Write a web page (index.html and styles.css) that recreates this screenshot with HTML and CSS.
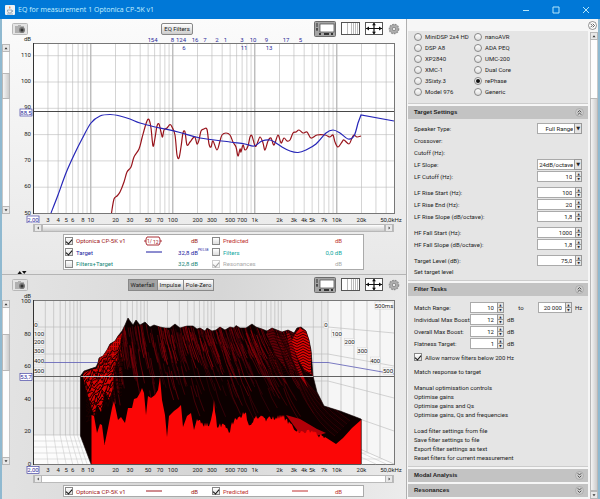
FILE: index.html
```
<!DOCTYPE html>
<html lang="en">
<head>
  <meta charset="UTF-8">
  <meta name="viewport" content="width=device-width, initial-scale=1.0">
  <title>EQ for measurement 1 Optonica CP-5K v1</title>
  <link rel="stylesheet" href="styles.css">
</head>
<body>
  <svg class="defs" width="0" height="0">
    <symbol id="camera" viewBox="0 0 16 12">
      <rect x="0.5" y="0.5" width="15" height="11" rx="1" fill="#e4e4e4" stroke="#b8b8b8"/>
      <path d="M3 3h3v-1h3v1h3v7H3z" fill="#b0b0b0"/>
      <circle cx="10" cy="7" r="3" fill="#777"/>
      <circle cx="10" cy="7" r="1.5" fill="#333"/>
    </symbol>
    <symbol id="device" viewBox="0 0 22 16">
      <rect x="0.5" y="0.5" width="21" height="15" rx="1" fill="#a4a4a4" stroke="#6c6c6c"/>
      <rect x="6" y="3" width="14" height="8" fill="#fff" stroke="#444" stroke-width=".7"/>
      <path d="M2 3h2M2 5h2M2 8h2M3 7v3" stroke="#333"/>
      <path d="M5 13h2M10 13h5M17 13h2" stroke="#333" stroke-width="2"/>
    </symbol>
    <symbol id="lines" viewBox="0 0 19 13">
      <rect x="0.5" y="0.5" width="18" height="12" fill="#fff" stroke="#555"/>
      <path d="M6.5 1v11M10.5 1v11M12.5 1v11M14.5 1v11M16.500 1v11" stroke="#aaa" stroke-width=".8"/>
    </symbol>
    <symbol id="arrows" viewBox="0 0 18 13">
      <rect x="0.5" y="0.5" width="17" height="12" fill="#fff" stroke="#555"/>
      <path d="M1 6.500h16M9 1v11" stroke="#111" stroke-width="1.200"/>
      <path d="M1 6.500l3-2v4zM17 6.500l-3-2v4zM9 .8l-2 2.500h4zM9 12.200l-2-2.500h4z" fill="#111"/>
    </symbol>
    <symbol id="gear" viewBox="0 0 12 12">
      <circle cx="6" cy="6" r="4.700" fill="#b5b5b5" stroke="#8c8c8c" stroke-width="1.200" stroke-dasharray="1.800 1"/>
      <circle cx="6" cy="6" r="3.800" fill="#b5b5b5" stroke="#999" stroke-width=".6"/>
      <circle cx="6" cy="6" r="1.800" fill="#e8e8e8" stroke="#777" stroke-width=".8"/>
    </symbol>
    <symbol id="up" viewBox="0 0 8 8"><path d="M4 3l2 2.500H2z" fill="#333"/></symbol>
    <symbol id="down" viewBox="0 0 8 8"><path d="M4 5.500l2-2.500H2z" fill="#333"/></symbol>
    <symbol id="left" viewBox="0 0 8 8"><path d="M3 4l2-2v4z" fill="#333"/></symbol>
    <symbol id="right" viewBox="0 0 8 8"><path d="M5.500 4l-2-2v4z" fill="#333"/></symbol>
    <symbol id="fold" viewBox="0 0 9 9">
      <circle cx="4.500" cy="4.500" r="4" fill="#ccc" stroke="#a4a4a4" stroke-width=".7"/>
      <path d="M2.700 4.300l1.800-1.800 1.800 1.800M2.700 6.800L4.500 5l1.800 1.800" fill="none" stroke="#444" stroke-width=".9"/>
    </symbol>
    <symbol id="unfold" viewBox="0 0 9 9">
      <circle cx="4.500" cy="4.500" r="4" fill="#ccc" stroke="#a4a4a4" stroke-width=".7"/>
      <path d="M2.700 2.200L4.500 4l1.800-1.800M2.700 4.700l1.800 1.800 1.800-1.800" fill="none" stroke="#444" stroke-width=".9"/>
    </symbol>
  </svg>

  <header class="titlebar">
    <svg class="app-icon" viewBox="0 0 10 10">
      <rect width="10" height="10" rx="1" fill="#eef2f5"/>
      <path d="M5 1q-2 1.500 0 3 1-1.500 0-3" fill="#e08a50"/>
      <path d="M2.500 5h4.500v1q0 2-2.200 2T2.500 6zM7 5.500q1.500 0 0 1.500M2 9h6" fill="none" stroke="#8a9aa8" stroke-width=".8"/>
    </svg>
    <h1>EQ for measurement 1 Optonica CP-5K v1</h1>
    <button class="win" aria-label="Minimize"><svg viewBox="0 0 8 8"><path d="M1 4.500h6"/></svg></button>
    <button class="win" aria-label="Maximize"><svg viewBox="0 0 8 8"><path d="M1 1h6v6H1z"/></svg></button>
    <button class="win" aria-label="Close"><svg viewBox="0 0 8 8"><path d="M1 1l6 6M7 1L1 7"/></svg></button>
  </header>

  <main class="window">
    <div class="graphs">
      <section class="graph top">
        <div class="toolbar">
          <button class="icon" aria-label="Capture"><svg class="i-camera"><use href="#camera"/></svg></button>
          <div class="tabs"><button class="tab">EQ Filters</button></div>
          <div class="tools">
            <button class="icon" aria-label="Scrollbars"><svg class="i-device"><use href="#device"/></svg></button>
            <button class="icon" aria-label="Frequency axis"><svg class="i-lines"><use href="#lines"/></svg></button>
            <button class="icon" aria-label="Limits"><svg class="i-arrows"><use href="#arrows"/></svg></button>
            <button class="icon" aria-label="Controls"><svg class="i-gear"><use href="#gear"/></svg></button>
          </div>
        </div>
        <div class="vscroll">
          <svg class="arrow"><use href="#up"/></svg><i class="thumb"></i><svg class="arrow"><use href="#down"/></svg>
        </div>
        <svg class="plot" id="eqPlot" viewBox="10 36 396 187"></svg>
        <div class="hscroll full">
          <svg class="arrow"><use href="#left"/></svg><i class="thumb"></i><svg class="arrow"><use href="#right"/></svg>
        </div>
        <div class="legend">
          <label class="red"><input type="checkbox" checked>Optonica CP-5K v1</label>
          <svg class="trace" viewBox="0 0 20 10">
            <path d="M1 5h18" stroke="#a01820" stroke-width=".9"/>
            <path d="M4 1h12l1 2v4l-1 2H4L3 7V3z" fill="#fff" stroke="#a01820" stroke-width=".9"/>
            <text x="4" y="7">1/</text><text x="10" y="8">12</text>
          </svg>
          <output class="red">dB</output>
          <label class="lightred"><input type="checkbox">Predicted</label>
          <output class="lightred">dB</output>

          <label class="blue"><input type="checkbox" checked>Target</label>
          <svg class="trace" viewBox="0 0 20 10"><path d="M3 5h16" stroke="#1a1aa0"/></svg>
          <output class="blue">32,8 dB<sup>PK/LSB</sup></output>
          <label class="teal"><input type="checkbox">Filters</label>
          <output class="teal">0,0 dB</output>

          <label class="green"><input type="checkbox">Filters+Target</label>
          <span></span>
          <output class="green">32,8 dB</output>
          <label class="grey"><input type="checkbox" checked disabled>Resonances</label>
          <output class="grey">dB</output>
        </div>
      </section>

      <div class="splitter">
        <svg viewBox="0 0 12 4"><path d="M0 4l3-4 3 4zM6 0h6L9 4z" fill="#111"/></svg>
      </div>

      <section class="graph bottom">
        <div class="toolbar">
          <button class="icon" aria-label="Capture"><svg class="i-camera"><use href="#camera"/></svg></button>
          <div class="tabs">
            <button class="tab active">Waterfall</button><button class="tab">Impulse</button><button class="tab">Pole-Zero</button>
          </div>
          <div class="tools">
            <button class="icon" aria-label="Scrollbars"><svg class="i-device"><use href="#device"/></svg></button>
            <button class="icon" aria-label="Frequency axis"><svg class="i-lines"><use href="#lines"/></svg></button>
            <button class="icon" aria-label="Limits"><svg class="i-arrows"><use href="#arrows"/></svg></button>
            <button class="icon" aria-label="Controls"><svg class="i-gear"><use href="#gear"/></svg></button>
          </div>
        </div>
        <div class="vscroll">
          <svg class="arrow"><use href="#up"/></svg><i class="thumb"></i><svg class="arrow"><use href="#down"/></svg>
        </div>
        <svg class="plot" id="waterfall" viewBox="10 292 396 182"></svg>
        <div class="hscroll">
          <svg class="arrow"><use href="#left"/></svg><i class="thumb"></i><svg class="arrow"><use href="#right"/></svg>
        </div>
        <div class="legend single">
          <label class="red"><input type="checkbox" checked>Optonica CP-5K v1</label>
          <svg class="trace" viewBox="0 0 20 10"><path d="M3 5h16" stroke="#a01820"/></svg>
          <output class="red">dB</output>
          <label class="lightred"><input type="checkbox" checked>Predicted</label>
          <svg class="trace" viewBox="0 0 20 10"><path d="M3 5h16" stroke="#c03030"/></svg>
          <output class="lightred">dB</output>
        </div>
      </section>
    </div>

    <aside class="settings">
      <div class="panels">
        <div class="equalisers">
          <label><input type="radio" name="eq">MiniDSP 2x4 HD</label><label><input type="radio" name="eq">nanoAVR</label>
          <label><input type="radio" name="eq">DSP A8</label><label><input type="radio" name="eq">ADA PEQ</label>
          <label><input type="radio" name="eq">XP2840</label><label><input type="radio" name="eq">UMC-200</label>
          <label><input type="radio" name="eq">XMC-1</label><label><input type="radio" name="eq">Dual Core</label>
          <label><input type="radio" name="eq">3Sixty.3</label><label><input type="radio" name="eq" checked>rePhase</label>
          <label><input type="radio" name="eq">Model 976</label><label><input type="radio" name="eq">Generic</label>
        </div>

        <section class="panel">
          <h2>Target Settings<svg><use href="#fold"/></svg></h2>
          <div class="body target">
            <div class="row"><label for="speaker">Speaker Type:</label><span class="combo"><select id="speaker"><option>Full Range</option></select></span></div>
            <div class="row"><span>Crossover:</span></div>
            <div class="row"><span>Cutoff (Hz):</span></div>
            <div class="row"><label for="slope">LF Slope:</label><span class="combo"><select id="slope"><option>24dB/octave</option></select></span></div>
            <div class="row last"><label for="cutoff">LF Cutoff (Hz):</label><span class="spin"><input type="text" id="cutoff" value="10"></span></div>
            <div class="row"><label for="riseStart">LF Rise Start (Hz):</label><span class="spin"><input type="text" id="riseStart" value="100"></span></div>
            <div class="row"><label for="riseEnd">LF Rise End (Hz):</label><span class="spin"><input type="text" id="riseEnd" value="20"></span></div>
            <div class="row last"><label for="riseSlope">LF Rise Slope (dB/octave):</label><span class="spin"><input type="text" id="riseSlope" value="1,8"></span></div>
            <div class="row"><label for="fallStart">HF Fall Start (Hz):</label><span class="spin"><input type="text" id="fallStart" value="1000"></span></div>
            <div class="row last"><label for="fallSlope">HF Fall Slope (dB/octave):</label><span class="spin"><input type="text" id="fallSlope" value="1,8"></span></div>
            <div class="row"><label for="level">Target Level (dB):</label><span class="spin"><input type="text" id="level" value="75,0"></span></div>
            <button class="task">Set target level</button>
          </div>
        </section>

        <section class="panel">
          <h2>Filter Tasks<svg><use href="#fold"/></svg></h2>
          <div class="body filter">
            <div class="row range">
              <label for="from">Match Range:</label><span class="spin"><input type="text" id="from" value="10"></span>
              <label class="to" for="to">to</label><span class="spin"><input type="text" id="to" value="20 000"></span><span class="unit">Hz</span>
            </div>
            <div class="row"><label for="individual">Individual Max Boost:</label><span class="spin"><input type="text" id="individual" value="12"></span><span class="unit">dB</span></div>
            <div class="row"><label for="overall">Overall Max Boost:</label><span class="spin"><input type="text" id="overall" value="12"></span><span class="unit">dB</span></div>
            <div class="row"><label for="flatness">Flatness Target:</label><span class="spin"><input type="text" id="flatness" value="1"></span><span class="unit">dB</span></div>
            <label class="narrow"><input type="checkbox" checked>Allow narrow filters below 200 Hz</label>
            <button class="task last">Match response to target</button>
            <button class="task">Manual optimisation controls</button>
            <button class="task">Optimise gains</button>
            <button class="task">Optimise gains and Qs</button>
            <button class="task last">Optimise gains, Qs and frequencies</button>
            <button class="task">Load filter settings from file</button>
            <button class="task">Save filter settings to file</button>
            <button class="task">Export filter settings as text</button>
            <button class="task">Reset filters for current measurement</button>
          </div>
        </section>

        <section class="panel"><h2>Modal Analysis<svg><use href="#unfold"/></svg></h2></section>
        <section class="panel"><h2>Resonances<svg><use href="#unfold"/></svg></h2></section>
      </div>
      <div class="side">
        <button class="icon" aria-label="Hide panel">
          <svg class="hide" viewBox="0 0 9 9"><circle cx="4.500" cy="4.500" r="4" fill="#fff" stroke="#666" stroke-width=".7"/><path d="M2.500 2.700l1.800 1.800-1.800 1.800M4.700 2.700l1.800 1.800-1.800 1.800" fill="none" stroke="#333" stroke-width=".8"/></svg>
        </button>
        <div class="vscroll">
          <svg class="arrow"><use href="#up"/></svg><i class="thumb"></i><svg class="arrow"><use href="#down"/></svg>
        </div>
      </div>
    </aside>
  </main>
  <script src="plot.js"></script>
</body>
</html>
```
FILE: styles.css
```
*,
*::before,
*::after {
  box-sizing: border-box;
}

body {
  margin: 0;
  min-height: 100vh;
  display: flex;
  flex-direction: column;
  font: 6px/9px Roboto, "Liberation Sans", sans-serif;
  color: #222;
  background: #e8e8e8;
}

button, input, select {
  font: inherit;
  color: inherit;
  margin: 0;
  padding: 0;
}

button {
  border: none;
  background: none;
}

svg {
  display: block;
}

.defs {
  position: absolute;
}

/* title bar */
.titlebar {
  display: flex;
  align-items: center;
  height: 19px;
  padding: 0 10px 0 5px;
  background: #0078d7;
}

.app-icon {
  width: 10px;
  height: 10px;
}

.titlebar h1 {
  flex: 1;
  margin: 0 0 0 3px;
  font: 7px/19px "Open Sans", sans-serif;
  color: #c4f0ff;
}

.win {
  margin-left: 22px;
}

.win svg {
  width: 8px;
  height: 8px;
  fill: none;
  stroke: #b4e6fa;
  stroke-width: 1;
}

/* window */
.window {
  flex: 1;
  display: flex;
  border: solid #8fb9d0;
  border-width: 0 2px 2px;
  border-bottom-color: #5b9fd4;
}

.graphs {
  flex: 1;
  display: flex;
  flex-direction: column;
  min-width: 0;
  background: #ededed;
  border-right: 1px solid #b0b0b0;
}

.graph {
  display: grid;
  grid-template-columns: 8px 1fr;
  align-content: start;
}

.top {
  grid-template-rows: 17px auto 9px 38px;
  background: linear-gradient(#fbfbfb, #e8e8e8);
}

.bottom {
  flex: 1;
  grid-template-rows: 17px auto 9px 16px;
  background: linear-gradient(100deg, #e4e4e4, #d6d6d6 50%, #ececec);
}

.toolbar {
  grid-column: 1 / 3;
  display: flex;
  align-items: center;
  padding: 2px 6px 0 10px;
}

.i-camera { width: 16px; height: 12px; }
.i-device { width: 22px; height: 16px; }
.i-lines { width: 19px; height: 13px; }
.i-arrows { width: 18px; height: 13px; }
.i-gear { width: 12px; height: 12px; }

.tabs {
  display: flex;
  flex: 1;
  justify-content: center;
}

.top .tabs {
  padding-left: 12px;
}

.tab {
  height: 12px;
  padding: 0 2px;
  line-height: 10px;
  border: 1px solid #888;
  background: linear-gradient(#fff, #ccc);
  white-space: nowrap;
}

.top .tab {
  border-radius: 2px;
}

.tab + .tab {
  border-left: none;
}

.tab.active {
  background: #a4a4a4;
}

.tools {
  display: flex;
  align-items: center;
  gap: 5px;
}

.plot {
  width: 100%;
}

.plot text {
  font-size: 6px;
  fill: #222;
}

.plot .mark {
  fill: #2a2a9a;
}

/* scroll bars */
.vscroll {
  display: flex;
  flex-direction: column;
  align-items: center;
  background: #fdfdfd;
  border: solid #c8c8c8;
  border-width: 0 1px;
}

.graph .vscroll {
  margin: 8px 0 9px;
}

.arrow {
  flex: none;
  width: 8px;
  height: 8px;
  background: #e8e8e8;
  border: 1px solid #b8b8b8;
}

.thumb {
  background: linear-gradient(90deg, #f4f4f4, #ccc);
  border: 1px solid #b8b8b8;
}

.vscroll .thumb {
  width: 8px;
  height: 26px;
  margin: 21px 0 auto;
}

.bottom .vscroll .thumb {
  height: 37px;
  margin-top: 26px;
}

.hscroll {
  grid-column: 2;
  display: flex;
  align-items: center;
  height: 8px;
  margin: 1px 12px 0 23px;
  background: #fff;
  border: 1px solid #bbb;
}

.hscroll .thumb {
  flex: 1;
  height: 8px;
  background: linear-gradient(#fff, #ccc);
  visibility: hidden;
}

.hscroll.full .thumb {
  visibility: visible;
}

/* legend */
.legend {
  grid-column: 2;
  display: grid;
  grid-template-columns: 77px 22px 32px 1fr 30px;
  align-items: center;
  column-gap: 1px;
  width: 301px;
  height: 36px;
  margin: 2px 0 0 53px;
  padding: 0 21px 0 1px;
  background: #fff;
  border: 1px solid #aaa;
}

.legend.single {
  grid-template-columns: 77px 22px 32px 1fr 22px 30px;
  height: 12px;
}

.legend label {
  display: flex;
  align-items: center;
  gap: 3px;
  white-space: nowrap;
}

.legend label:nth-of-type(even) {
  padding-left: 13px;
}

.legend output {
  text-align: right;
  white-space: nowrap;
}

.legend sup {
  position: absolute;
  margin-top: -1px;
  font-size: 3px;
  line-height: 6px;
}

.trace {
  width: 20px;
  height: 10px;
}

.trace text {
  font-size: 5px;
  fill: #a01820;
}

.red { color: #a01820; }
.lightred { color: #c03030; }
.blue { color: #1a1aa0; }
.teal { color: #10a8a0; }
.green { color: #208878; }
.grey { color: #aaa; }

input[type="checkbox"],
input[type="radio"] {
  appearance: none;
  flex: none;
  width: 8px;
  height: 8px;
  border: 1px solid #888;
  background: linear-gradient(#fff, #ddd);
}

input[type="radio"] {
  border-radius: 50%;
}

input[type="checkbox"]:checked::before {
  content: "";
  display: block;
  width: 4px;
  height: 6px;
  margin-left: 1px;
  border: solid #111;
  border-width: 0 1px 1px 0;
  transform: rotate(40deg);
}

input[type="checkbox"]:disabled {
  opacity: 0.4;
}

input[type="radio"]:checked::before {
  content: "";
  display: block;
  width: 4px;
  height: 4px;
  margin: 1px;
  border-radius: 50%;
  background: #111;
}

.splitter {
  height: 5px;
  padding: 1px 0 0 14px;
  background: #e4e4e4;
  border-bottom: 1px solid #b4b4b4;
}

.splitter svg {
  width: 12px;
  height: 3px;
}

/* settings */
.settings {
  display: flex;
  flex: none;
  width: 191px;
  background: #f6f6f6;
}

.panels {
  flex: 1;
  display: flex;
  flex-direction: column;
  gap: 2px;
  padding: 12px 0 0 1px;
}

.equalisers {
  display: grid;
  grid-template-columns: 60px 1fr;
  grid-auto-rows: 11px;
  align-items: center;
  height: 73px;
  padding-left: 6px;
  background: #e5e5e5;
  border-bottom: 1px solid #ccc;
}

.equalisers label,
.narrow {
  display: flex;
  align-items: center;
  gap: 3px;
}

.panel h2 {
  display: flex;
  align-items: center;
  justify-content: space-between;
  height: 13px;
  margin: 0;
  padding: 0 4px 0 6px;
  font: bold 6px/13px "Liberation Sans", sans-serif;
  background: #c3c3c3;
}

.panel h2 svg {
  width: 9px;
  height: 9px;
}

.body {
  padding: 5px 6px 4px;
  background: #e5e5e5;
  border-bottom: 1px solid #ccc;
}

.body.target {
  padding-top: 3px;
}

.row {
  display: flex;
  align-items: center;
  justify-content: space-between;
  height: 12px;
}

.row.last {
  margin-bottom: 4px;
}

.combo,
.spin {
  position: relative;
  flex: none;
  width: 45px;
  height: 11px;
}

.combo select,
.spin input {
  display: block;
  appearance: none;
  width: 100%;
  height: 11px;
  padding-right: 9px;
  text-align: right;
  text-align-last: right;
  border: 1px solid #aaa;
  border-radius: 0;
  background: #fff;
}

.combo select {
  padding-right: 8px;
}

.combo::after,
.spin::before,
.spin::after {
  content: "\25BC";
  position: absolute;
  right: 0;
  bottom: 0;
  width: 8px;
  height: 11px;
  font: 5px/9px "DejaVu Sans", sans-serif;
  text-align: center;
  background: #e4e4e4;
  border: 1px solid #999;
  pointer-events: none;
}

.spin::before,
.spin::after {
  width: 7px;
  height: 6px;
  font-size: 3px;
  line-height: 4px;
}

.spin::before {
  content: "\25B2";
  bottom: 5px;
}

.filter .row {
  justify-content: flex-start;
}

.filter .row label:first-child {
  width: 56px;
  white-space: nowrap;
}

.filter .spin {
  width: 34px;
}

.filter .to {
  width: 34px;
  text-align: center;
}

.unit {
  margin-left: 3px;
}

.narrow {
  height: 10px;
  margin: 3px 0 5px;
}

.task {
  display: block;
  height: 9px;
  line-height: 9px;
}

.target .task {
  height: 10px;
}

.task.last {
  margin-bottom: 7px;
}

.side {
  display: flex;
  flex-direction: column;
  width: 10px;
  padding-top: 2px;
}

.hide {
  width: 9px;
  height: 9px;
}

.side .vscroll {
  flex: 1;
  margin: 2px 0 0 2px;
}

.side .vscroll .thumb {
  flex: 1;
  margin: 58px 0 0;
}
```
FILE: plot.js
```
const NS = 'http://www.w3.org/2000/svg';

function add(parent, tag, attrs, text) {
  const el = document.createElementNS(NS, tag);
  for (const k in attrs) el.setAttribute(k, attrs[k]);
  if (text !== undefined) el.textContent = text;
  parent.appendChild(el);
  return el;
}

function line(svg, x1, y1, x2, y2, stroke, width) {
  add(svg, 'line', { x1, y1, x2, y2, stroke, 'stroke-width': width || 0.6 });
}

function label(svg, x, y, text, anchor, cls) {
  add(svg, 'text', { x, y, 'text-anchor': anchor || 'middle', class: cls || '' }, text);
}

// boxed value on an axis
function tag(svg, x, y, w, text, stroke) {
  add(svg, 'rect', { x, y, width: w, height: 7, fill: '#fff', stroke: stroke, 'stroke-width': 0.6 });
  label(svg, x + w / 2, y + 5.6, text, 'middle', stroke === '#ccc' ? '' : 'mark');
}

// frequency to x, 2 Hz at the left edge
const fx = (f, perDecade) => 33.5 + Math.log10(f / 2) * perDecade;

function freqs() {
  const out = [];
  for (let d = 1; d <= 10000; d *= 10) {
    for (let m = 1; m < 10; m++) if (m * d > 2 && m * d < 50000) out.push(m * d);
  }
  return out;
}

function freqLabels(svg, y) {
  const names = { 3: '3', 4: '4', 5: '5', 6: '6', 8: '8', 10: '10', 20: '20', 30: '30', 50: '50', 70: '70',
    100: '100', 200: '200', 300: '300', 500: '500', 700: '700', 1000: '1k', 2000: '2k', 3000: '3k',
    4000: '4k', 5000: '5k', 7000: '7k', 10000: '10k', 20000: '20k' };
  for (const f in names) label(svg, fx(f, 82), y, names[f]);
  label(svg, 391, y, '50,0kHz');
  tag(svg, 27, y - 5.5, 12, '2,00', '#2a2a9a');
}

// smooth curve through the points
function smooth(p) {
  let d = 'M' + p[0];
  for (let i = 0; i < p.length - 1; i++) {
    const a = p[i - 1] || p[i], b = p[i], c = p[i + 1], e = p[i + 2] || c;
    d += `C${b[0] + (c[0] - a[0]) / 6} ${b[1] + (c[1] - a[1]) / 6} ${c[0] - (e[0] - b[0]) / 6} ${c[1] - (e[1] - b[1]) / 6} ${c}`;
  }
  return d;
}

function drawEq() {
  const svg = document.getElementById('eqPlot');
  add(svg, 'rect', { x: 33.5, y: 43.5, width: 361, height: 170, fill: '#fff', stroke: '#777' });
  freqs().forEach(f => {
    const major = [10, 100, 1000, 10000].includes(f);
    line(svg, fx(f, 82), 44, fx(f, 82), 213, major ? '#777' : '#c2c2c2', 0.7);
  });
  for (let db = 60; db <= 110; db += 10) line(svg, 34, 213.5 - (db - 50) * 2.63, 394, 213.5 - (db - 50) * 2.63, '#b8b8b8');
  line(svg, 33.5, 43, 33.5, 214, '#333', 1);
  for (let db = 50; db <= 110; db += 10) label(svg, 31, 214.5 - (db - 50) * 2.63, db, 'end');
  label(svg, 31, 41, 'dB', 'end');

  const red = [[111.5,213],[114,199],[117,196],[120,192],[124,182],[127,172],[131,167],[134,157],[139,149],[142,138],[145,127],[147,121],[149,119.5],[151,128],[153,146],[155,138],[157,126],[159,124],[161,132],[162.5,137],[164,130],[167,128],[170,124.5],[172,127],[175,135],[177,155],[179,158],[181,147],[183,133],[185,132],[187,145],[190,142],[193,138],[195,137],[197,144],[199,140],[201,131],[204,129],[207,129.5],[209,144],[211,147],[213,141],[217,150],[220,141],[222,135],[226,133],[230,135],[233,142],[236,147],[238,156],[240,149],[241,152],[243,145],[245,150],[248,146],[250,137],[252,136],[255,146],[257,144],[260,137],[263,143],[265,150],[268,141],[271,138],[274,145],[278,135],[281,143],[284,138],[287,141],[290,140],[293,133],[296,132],[299,130],[303,133],[307,132],[311,138],[317,135],[325,135],[330,137],[333,135],[335,142],[338,147],[342,142],[344,140],[349,144],[352,138],[354,135],[357,137],[361,136]];
  const blue = [[51,213],[58,195],[66,173],[74,155],[82,139],[91,123],[100,116],[110,114.5],[120,116],[130,119],[140,123],[155,127],[165,129],[180,132.5],[200,138],[230,142],[245,144],[254,146],[262,141],[270,140],[276,143],[282,147],[290,151],[298,152.5],[306,150],[316,144],[326,133],[333,130],[340,133],[348,139],[354,136],[358,123]];
  add(svg, 'path', { d: smooth(red), fill: 'none', stroke: '#98141c', 'stroke-width': 1.2 });
  add(svg, 'path', { d: smooth(blue) + 'L361 115L394 121', fill: 'none', stroke: '#2626b8', 'stroke-width': 1.2 });
  line(svg, 33, 111.5, 394, 111.5, '#333', 0.9);
  tag(svg, 20, 109, 12, '88,5', '#2a2a9a');

  // filter numbers over their frequencies
  [[149.5, 1], [152.5, 5], [156, 4], [172.5, 8], [181, '124'], [195, 16], [205, 7], [217, 2], [225.5, 1], [242, 3],
   [253, 10], [266.5, 9], [286, 17], [300.5, 5]].forEach(m => label(svg, m[0], 41.5, m[1], 'middle', 'mark'));
  [[184, 6], [244, 11], [269, 13]].forEach(m => label(svg, m[0], 50, m[1], 'middle', 'mark'));
  freqLabels(svg, 221.5);
}

let seed = 7;
function rnd() {
  seed = (seed * 16807) % 2147483647;
  return seed / 2147483647;
}

function drawWaterfall() {
  const svg = document.getElementById('waterfall');
  add(svg, 'rect', { x: 33.5, y: 300.5, width: 361, height: 164, fill: '#ececec', stroke: '#777' });
  add(svg, 'path', { d: 'M34 435H328L394 464H34z', fill: '#fcfcfc' });
  add(svg, 'path', { d: 'M328 301H394V464L328 435z', fill: '#f6f6f6' });

  // back wall, floor and side wall
  freqs().forEach(f => {
    const x = fx(f, 67);
    line(svg, x, 301, x, 435, '#b4b4b4');
    line(svg, x, 435, fx(f, 82), 464, '#ccc');
  });
  [328, 341, 354, 367, 380].forEach(x => line(svg, x, 301, x, 435 + (x - 328) * 0.44, '#b0b0b0'));
  [[327, 333], [354, 366], [381, 398], [408, 431], [435, 464]].forEach(w => {
    line(svg, 34, w[0], 328, w[0], '#b8b8b8');
    line(svg, 328, w[0], 394, w[1], '#b8b8b8');
  });
  [441, 447, 453, 459].forEach(y => line(svg, 34, y, 328 + (y - 435) * 2.27, y, '#ccc'));
  add(svg, 'path', { d: 'M33 362.500H328L394 374', fill: 'none', stroke: '#5a5ab4', 'stroke-width': 0.8 });

  const shape = 'M80.500 376L84 371L90 369L96 367L98 363L99 358L103 356L107 350L110 344L115 341L118 336L122 331L125 325L128 318L130 321L133 325L136 320L140 325L145 322L150 327L154 325L160 327L165 328L170 328L175 324L180 328L187 326L193 326L197 329L200 328L205 331L207 328L212 331L216 330L220 327L225 330L230 327L234 328L236 325.500L240 328L246 328L252 324L256 327L262 329L267 331L272 328L277 330L282 332L288 330L294 333L297 328L301 327L306 331L309 340L311 350L313 376L317 392L324 406L340 411L361 419V464H91L80.500 436z';
  const clip = add(svg, 'clipPath', { id: 'fall' });
  add(clip, 'path', { d: shape });
  add(svg, 'path', { d: shape, fill: '#0c0000', stroke: '#0c0000', 'stroke-width': 0.6 });
  const g = add(svg, 'g', { 'clip-path': 'url(#fall)', fill: 'none' });

  // decay streaks
  for (let i = 0; i < 430; i++) {
    const x = 100 + rnd() * 208;
    const y = 324 + rnd() * rnd() * 75;
    const len = 8 + rnd() * 28;
    const lean = 0.1 + (x - 100) / 208 * 0.45;
    const c = Math.round(60 + rnd() * (y < 350 ? 100 : 55));
    add(g, 'path', { d: `M${x} ${y}q${len * lean * 0.3} ${len * 0.5} ${len * lean} ${len}`, stroke: `rgb(${c},0,10)`, 'stroke-width': 0.4 + rnd() * 0.5 });
  }
  for (let i = 0; i < 16; i++) {
    add(g, 'path', { d: `M${290 + i} ${350 + i * 2}Q${302 + i} ${412 - i} ${335 + i} ${436 - i}`, stroke: i % 3 ? '#220004' : '#58000a', 'stroke-width': 0.5 });
  }

  // loud low end
  add(g, 'path', { d: 'M83 376L84 372L97 368L99 359L110 346L122 333L119 352L114 372L113 388L109 400L105 392L101 412L97 405L94 416L90 402L86 390z', fill: '#d40404' });
  for (let k = 0; k < 16; k++) {
    let d = `M${83 + k * 0.6} ${374 + k * 3}`;
    for (let x = 86; x < 124; x += 2) d += `L${x} ${372 + k * 3.2 - (x - 84) * 0.7 + (rnd() - 0.5) * 7}`;
    add(g, 'path', { d, stroke: '#1a0000', 'stroke-width': 1 });
  }
  for (let x = 99; x < 125; x += 2) {
    add(g, 'path', { d: `M${x} 335L${x - 2} ${365 + rnd() * 30}`, stroke: '#400', 'stroke-width': 0.7, 'stroke-dasharray': '3 1' });
  }

  // loud high end
  add(g, 'path', { d: 'M291 342L295 334L300 328L306 332L309 341L311 354L311 374L305 371L299 361L295 352z', fill: '#e00404' });
  add(g, 'path', { d: 'M286 332L290 334L296 356L303 375L308 388L301 378L292 358z', fill: '#a00008' });
  add(g, 'path', { d: 'M266 334L272 330L280 350L287 370L276 356z', fill: '#600008' });
  for (let k = 0; k < 17; k++) {
    const y = 331 + k * 2.7;
    add(g, 'path', { d: `M268 ${y + 2}q5 -3 10 0t10 0q3 -3 6 0t6 0t6 0t6 1`, stroke: '#200', 'stroke-width': 0.9 });
  }
  add(g, 'path', { d: 'M286 415L300 419L317 429L326 433L316 436L300 434z', fill: '#b00008' });

  // front slice
  const front = [[91.5,464],[91.5,415],[94,416],[97,433],[100,424],[102,425],[104.5,445],[108,428],[112,408],[114,401],[118,420],[121,417],[125,423],[128,408],[132,408],[134,399],[137,398],[140,393],[142,388],[144,393],[146,415],[148,396],[151,398],[155,395],[158,390],[160,377],[162,400],[165,415],[167,437],[169,416],[174,411],[178,408],[181,405],[183,427],[187,416],[191,413],[194,430],[197,419],[200,420],[203,425],[210,423],[212,415],[214,400],[217,427],[225,425],[229,433],[232,422],[237,420],[245,413],[250,425],[255,418],[267,419],[283,417],[290,423],[300,433],[307,430],[317,435],[325,437],[336,444],[343,438],[352,428],[361,420],[361,464]];
  let d = 'M' + front[0];
  for (let i = 1; i < front.length; i++) {
    const [x0, y0] = front[i - 1], [x1, y1] = front[i];
    if (x0 >= 197 && x1 <= 326) {
      for (let x = x0 + 1; x < x1; x++) d += `L${x} ${y0 + (y1 - y0) * (x - x0) / (x1 - x0) + (rnd() - 0.5) * 6}`;
    }
    d += `L${x1} ${y1}`;
  }
  add(svg, 'path', { d: d + 'z', fill: '#fb0606' });
  line(svg, 361.3, 419, 361.3, 464, '#400', 0.6);

  // time labels down both walls
  [[0, 325, 34], [100, 333.5, 38], [200, 342, 38], [300, 351, 38], [400, 360.500, 38], [500, 371, 38]].forEach((t, i) => {
    const w = t[0] ? 10 : 4, x = t[0] ? 319 + i * 12.8 : 324;
    add(svg, 'rect', { x: 34, y: t[1] - 3.5, width: w, height: 7, fill: '#f4f4f4', stroke: '#ccc', 'stroke-width': 0.4 });
    label(svg, 34 + w / 2, t[1] + 2, t[0]);
    add(svg, 'rect', { x: x, y: t[1] - 3.5, width: w, height: 7, fill: '#f8f8f8', stroke: '#ccc', 'stroke-width': 0.4 });
    label(svg, x + w / 2, t[1] + 2, t[0]);
  });
  tag(svg, 375, 302, 18, '500ms', '#ccc');

  line(svg, 33, 376.5, 394, 376.5, '#555', 0.9);
  line(svg, 81, 376.5, 313, 376.5, '#ccc', 0.9);
  line(svg, 33.5, 300, 33.5, 465, '#333', 1);
  for (let db = 0; db <= 100; db += 20) label(svg, 31, 466 - db * 1.63, db, 'end');
  label(svg, 31, 297.5, 'dB', 'end');
  tag(svg, 20, 373.5, 12, '53,7', '#2a2a9a');
  freqLabels(svg, 472);
}

drawEq();
drawWaterfall();
```
